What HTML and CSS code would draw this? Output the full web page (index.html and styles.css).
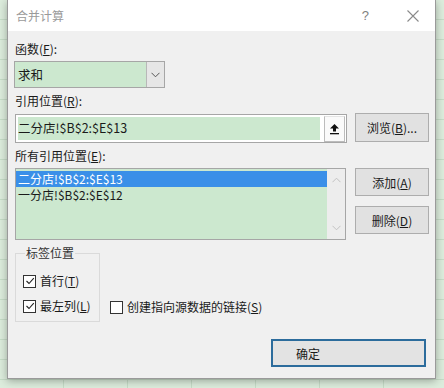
FILE: index.html
```html
<!DOCTYPE html>
<html lang="zh-CN">
<head>
    <meta charset="UTF-8">
    <title>合并计算</title>
    <link rel="stylesheet" href="styles.css">
</head>
<body>
    <div class="dialog">
        <div class="titlebar">
            <span class="title">合并计算</span>
            <span class="help">?</span>
            <svg class="close" width="12" height="12" viewBox="0 0 12 12">
                <path d="M0.5 0.5 L11.5 11.5 M11.5 0.5 L0.5 11.5" stroke="#8a8a8a" stroke-width="1.1" fill="none"/>
            </svg>
        </div>

        <div class="content">
            <div class="label first">函数(<u>F</u>):</div>
            <div class="select">
                <span class="select-value">求和</span>
                <span class="select-btn">
                    <svg width="9" height="6" viewBox="0 0 9 6"><path d="M0.5 0.8 L4.5 4.8 L8.5 0.8" stroke="#555" fill="none"/></svg>
                </span>
            </div>

            <div class="label">引用位置(<u>R</u>):</div>
            <div class="row">
                <div class="refbox">
                    <span class="ref-value">二分店!$B$2:$E$13</span>
                    <span class="ref-btn">
                        <svg width="11" height="12" viewBox="0 0 11 12">
                            <path d="M5.5 1 L10 5.5 L7 5.5 L7 8.5 L4 8.5 L4 5.5 L1 5.5 Z" fill="#111"/>
                            <rect x="1" y="10" width="9" height="1.3" fill="#111"/>
                        </svg>
                    </span>
                </div>
                <button class="btn">浏览(<u>B</u>)...</button>
            </div>

            <div class="label">所有引用位置(<u>E</u>):</div>
            <div class="row">
                <div class="listbox">
                    <div class="items">
                        <div class="item selected">二分店!$B$2:$E$13</div>
                        <div class="item">一分店!$B$2:$E$12</div>
                    </div>
                    <div class="scrollbar">
                        <svg width="9" height="6" viewBox="0 0 9 6"><path d="M0.5 5.2 L4.5 1.2 L8.5 5.2" stroke="#c2c2c2" fill="none"/></svg>
                        <svg width="9" height="6" viewBox="0 0 9 6"><path d="M0.5 0.8 L4.5 4.8 L8.5 0.8" stroke="#c2c2c2" fill="none"/></svg>
                    </div>
                </div>
                <div class="side-buttons">
                    <button class="btn">添加(<u>A</u>)</button>
                    <button class="btn">删除(<u>D</u>)</button>
                </div>
            </div>

            <div class="options">
                <fieldset class="group">
                    <legend>标签位置</legend>
                    <label class="check">
                        <span class="box"><svg width="10" height="10" viewBox="0 0 10 10"><path d="M1.5 5 L4 7.5 L8.8 2.2" stroke="#222" stroke-width="1.1" fill="none"/></svg></span>
                        <span>首行(<u>T</u>)</span>
                    </label>
                    <label class="check">
                        <span class="box"><svg width="10" height="10" viewBox="0 0 10 10"><path d="M1.5 5 L4 7.5 L8.8 2.2" stroke="#222" stroke-width="1.1" fill="none"/></svg></span>
                        <span>最左列(<u>L</u>)</span>
                    </label>
                </fieldset>
                <label class="check link">
                    <span class="box"></span>
                    <span>创建指向源数据的链接(<u>S</u>)</span>
                </label>
            </div>

            <div class="footer">
                <button class="btn ok">确定</button>
            </div>
        </div>
    </div>
</body>
</html>
```

FILE: styles.css
```css
body {
    margin: 0;
    width: 444px;
    height: 388px;
    overflow: hidden;
    font-family: "Noto Sans CJK SC", "Noto Sans", sans-serif;
    font-size: 12px;
    color: #1a1a1a;
    background-color: #dcecdc;
    background-image:
        repeating-linear-gradient(to bottom, transparent 0, transparent 19px, #c6dcc7 19px, #c6dcc7 20px),
        repeating-linear-gradient(to right, transparent 0, transparent 63px, #c6dcc7 63px, #c6dcc7 64px);
}

.dialog {
    width: 427px;
    margin-left: 7px;
    background: #f0f0f0;
    border: 1px solid #9a9a9a;
    border-top: none;
    box-shadow: 0 2px 8px rgba(0, 0, 0, 0.3);
}

.titlebar {
    height: 31px;
    background: #fff;
    display: flex;
    align-items: center;
    padding-left: 8px;
}

.title {
    color: #9a9a9a;
    font-size: 12px;
    flex: 1;
}

.help {
    color: #808080;
    font-family: "Liberation Sans", sans-serif;
    font-size: 13px;
    margin-right: 38px;
}

.close {
    margin-right: 16px;
}

.content {
    padding: 0 6px 11px 7px;
}

.label {
    line-height: 16px;
    margin: 5px 0 4px;
}

.label.first {
    margin-top: 10px;
}

.select {
    width: 149px;
    height: 25px;
    margin-left: -1px;
    border: 1px solid #a6a6a6;
    background: #cce8cf;
    display: flex;
}

.select-value {
    flex: 1;
    padding-left: 3px;
    line-height: 25px;
    font-size: 12.5px;
}

.select-btn {
    width: 17px;
    background: #e6e6e6;
    border-left: 1px solid #b8b8b8;
    display: flex;
    align-items: center;
    justify-content: center;
}

.row {
    display: flex;
    justify-content: space-between;
    align-items: flex-start;
}

.refbox {
    width: 326px;
    height: 23px;
    margin-top: 1px;
    border: 1px solid #a6a6a6;
    background: #fff;
    padding: 2px;
    display: flex;
    gap: 4px;
}

.ref-value {
    flex: 1;
    background: #cce8cf;
    line-height: 22px;
    font-size: 12.5px;
}

.ref-btn {
    width: 19px;
    margin: -1px -1px -2px 0;
    background: #fafafa;
    border: 1px solid #bcbcbc;
    border-top-color: #e4e4e4;
    display: flex;
    align-items: center;
    justify-content: center;
}

.btn {
    width: 74px;
    height: 29px;
    margin: 0;
    padding: 0;
    background: #e1e1e1;
    border: 1px solid #adadad;
    font-family: inherit;
    font-size: 12px;
    color: #1a1a1a;
}

.listbox {
    width: 329px;
    height: 70px;
    border: 1px solid #a6a6a6;
    background: #cce8cf;
    display: flex;
}

.items {
    flex: 1;
    padding-top: 2px;
}

.item {
    height: 16px;
    line-height: 16px;
    padding-left: 2px;
    font-size: 12px;
    overflow: hidden;
}

.item.selected {
    background: #3a8fe8;
    color: #fff;
}

.scrollbar {
    width: 18px;
    background: #ededed;
    display: flex;
    flex-direction: column;
    justify-content: space-between;
    align-items: center;
    padding: 8px 0 8px;
}

.side-buttons {
    display: flex;
    flex-direction: column;
    gap: 10px;
}

.side-buttons .btn {
    height: 28px;
}

.options {
    display: flex;
    align-items: flex-end;
    margin-top: 5px;
}

.group {
    margin: 0;
    min-width: 0;
    width: 68px;
    padding: 12px 8px 7px 7px;
    border: 1px solid #dadada;
    display: flex;
    flex-direction: column;
    gap: 9px;
}

.group legend {
    padding: 0 1px;
    margin-left: 2px;
    line-height: 16px;
    color: #333;
}

.check {
    display: flex;
    align-items: center;
    gap: 4px;
    line-height: 16px;
    white-space: nowrap;
}

.box {
    width: 11px;
    height: 11px;
    border: 1px solid #333;
    background: #fff;
    display: flex;
    align-items: center;
    justify-content: center;
}

.link {
    margin: 0 0 7px 10px;
}

.footer {
    display: flex;
    justify-content: flex-end;
    margin-top: 17px;
    padding-right: 3px;
}

.btn.ok {
    width: 155px;
    height: 28px;
    border: 2px solid #2c6c9c;
    background: #e3e3e3;
    text-align: left;
    padding-left: 23px;
}
```
